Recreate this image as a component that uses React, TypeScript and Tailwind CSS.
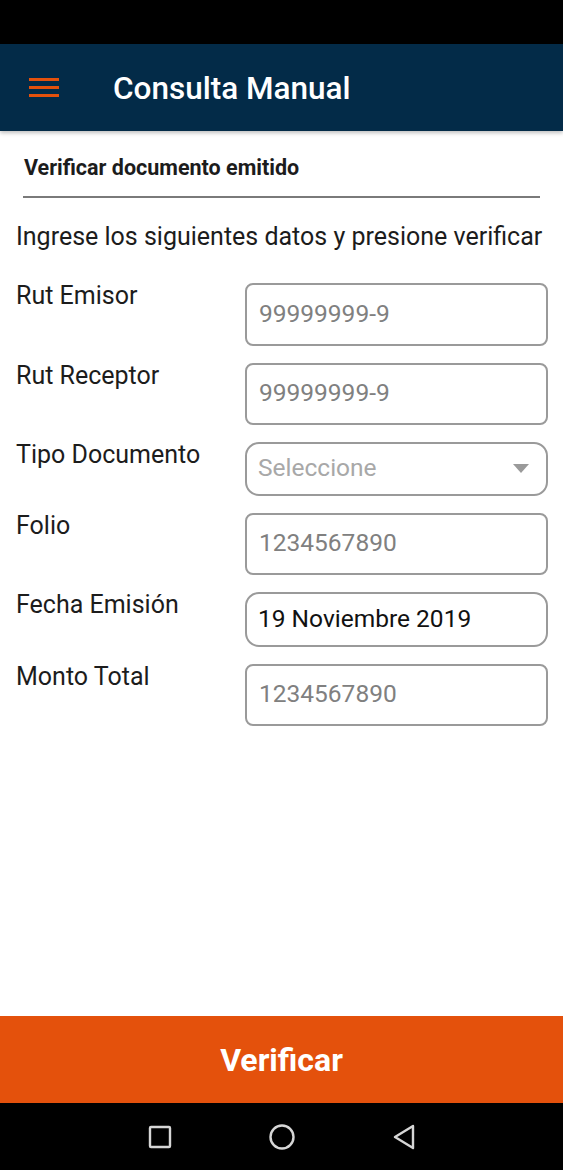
import React from 'react'

const fields = [
  { label: 'Rut Emisor', value: '99999999-9', kind: 'input' },
  { label: 'Rut Receptor', value: '99999999-9', kind: 'input' },
  { label: 'Tipo Documento', value: 'Seleccione', kind: 'select' },
  { label: 'Folio', value: '1234567890', kind: 'input' },
  { label: 'Fecha Emisión', value: '19 Noviembre 2019', kind: 'date' },
  { label: 'Monto Total', value: '1234567890', kind: 'input' },
]

const Field = ({ label, value, kind }: { label: string; value: string; kind: string }) => {
  if (kind === 'select') {
    return (
      <div className="flex items-start">
        <div className="w-[229px] text-[25px] leading-[26px] text-[#1c1c1c]">{label}</div>
        <div className="flex h-[53.5px] w-[303px] items-center justify-between rounded-[14px] border-2 border-[#9a9a9a] pl-[11px] pr-[17px]">
          <span className="text-[24.5px] text-[#a8a8a8]">{value}</span>
          <svg width="16" height="9" viewBox="0 0 16 9">
            <path d="M0 0h16L8 9z" fill="#9a9a9a" />
          </svg>
        </div>
      </div>
    )
  }
  if (kind === 'date') {
    return (
      <div className="flex items-start">
        <div className="w-[229px] text-[25px] leading-[26px] text-[#1c1c1c]">{label}</div>
        <div className="flex h-[54.5px] w-[303px] items-center rounded-[14px] border-2 border-[#9a9a9a] pl-[11px]">
          <span className="text-[24.5px] text-[#111]">{value}</span>
        </div>
      </div>
    )
  }
  return (
    <div className="flex items-start">
      <div className="w-[229px] text-[25px] leading-[26px] text-[#1c1c1c]">{label}</div>
      <div className="flex h-[62.5px] w-[303px] items-center rounded-[8px] border-2 border-[#9a9a9a] pl-[12px]">
        <span className="text-[24.5px] text-[#808080]">{value}</span>
      </div>
    </div>
  )
}

export default function App() {
  return (
    <div className="flex h-[1170px] w-[563px] flex-col bg-white font-['Roboto',sans-serif]">
      <div className="h-[44px] bg-black" />
      <header className="relative z-10 flex h-[87px] items-center bg-[#032b48] shadow-[0_2px_4px_rgba(0,0,0,0.25)]">
        <div className="ml-[29px] flex w-[30px] flex-col gap-[5px]">
          <span className="h-[3px] bg-[#e4510c]" />
          <span className="h-[3px] bg-[#e4510c]" />
          <span className="h-[3px] bg-[#e4510c]" />
        </div>
        <h1 className="ml-[54px] pt-[2px] text-[31.5px] font-medium text-white">Consulta Manual</h1>
      </header>

      <main className="flex-1">
        <div className="mx-[23px] mt-[23px] border-b-2 border-[#7a7a7a] pb-[14px] pl-[1px]">
          <h2 className="text-[21.5px] font-bold leading-[28px] text-[#1c1c1c]">Verificar documento emitido</h2>
        </div>
        <p className="ml-[16px] mt-[24px] text-[25px] leading-[30px] text-[#1c1c1c]">
          Ingrese los siguientes datos y presione verificar
        </p>
        <div className="ml-[16px] mt-[31px] flex flex-col gap-[17px]">
          {fields.map(f => (
            <Field key={f.label} {...f} />
          ))}
        </div>
      </main>

      <button className="h-[87px] bg-[#e4510c] text-[32px] font-bold text-white">Verificar</button>

      <nav className="flex h-[67px] items-center justify-center gap-[97px] bg-black">
        <svg width="24" height="24" viewBox="0 0 24 24">
          <rect x="2" y="2" width="20" height="20" fill="none" stroke="#d6d6d6" strokeWidth="2.4" rx="1" />
        </svg>
        <svg width="26" height="26" viewBox="0 0 26 26">
          <circle cx="13" cy="13" r="11.5" fill="none" stroke="#d6d6d6" strokeWidth="2.4" />
        </svg>
        <svg width="24" height="26" viewBox="0 0 24 26">
          <path d="M21 2 L3 13 L21 24 Z" fill="none" stroke="#d6d6d6" strokeWidth="2.4" strokeLinejoin="round" />
        </svg>
      </nav>
    </div>
  )
}
